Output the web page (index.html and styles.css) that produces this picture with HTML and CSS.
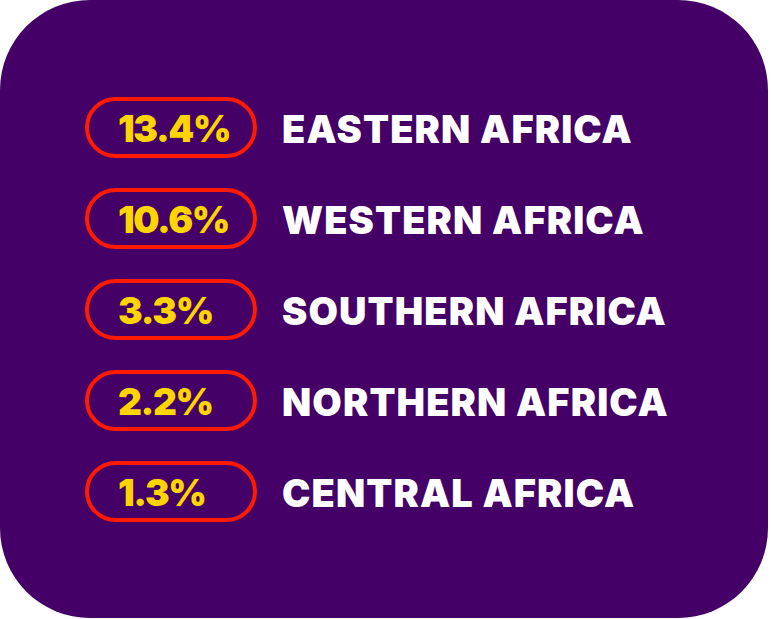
FILE: index.html
```html
<!DOCTYPE html>
<html lang="en">
<head>
    <meta charset="UTF-8">
    <title>Africa regions</title>
    <link rel="stylesheet" href="styles.css">
</head>
<body>
    <div class="card">
        <ul class="regions">
            <li class="region">
                <span class="pill">13.4%</span>
                <span class="name">EASTERN AFRICA</span>
            </li>
            <li class="region">
                <span class="pill">10.6%</span>
                <span class="name">WESTERN AFRICA</span>
            </li>
            <li class="region">
                <span class="pill">3.3%</span>
                <span class="name">SOUTHERN AFRICA</span>
            </li>
            <li class="region">
                <span class="pill">2.2%</span>
                <span class="name">NORTHERN AFRICA</span>
            </li>
            <li class="region">
                <span class="pill">1.3%</span>
                <span class="name">CENTRAL AFRICA</span>
            </li>
        </ul>
    </div>
</body>
</html>
```

FILE: styles.css
```css
body {
    margin: 0;
    padding: 0;
    background-color: #ffffff;
    font-family: Inter, "Noto Sans", sans-serif;
}

.card {
    width: 768px;
    height: 618px;
    box-sizing: border-box;
    padding: 97px 0 0 85px;
    background-color: #440066;
    border-radius: 90px;
}

.regions {
    list-style-type: none;
    margin: 0;
    padding: 0;
    display: flex;
    flex-direction: column;
    gap: 30px;
}

.region {
    display: flex;
    align-items: center;
    gap: 25px;
}

.pill {
    width: 172px;
    height: 61px;
    box-sizing: border-box;
    display: flex;
    align-items: center;
    padding: 2px 0 0 29px;
    border: 4px solid #ff1a00;
    border-radius: 31px;
    color: #ffd500;
    font-size: 37px;
    font-weight: 900;
    letter-spacing: -1.4px;
}

.name {
    padding-top: 2px;
    color: #ffffff;
    font-size: 38px;
    font-weight: 900;
    letter-spacing: 1.1px;
}
```
